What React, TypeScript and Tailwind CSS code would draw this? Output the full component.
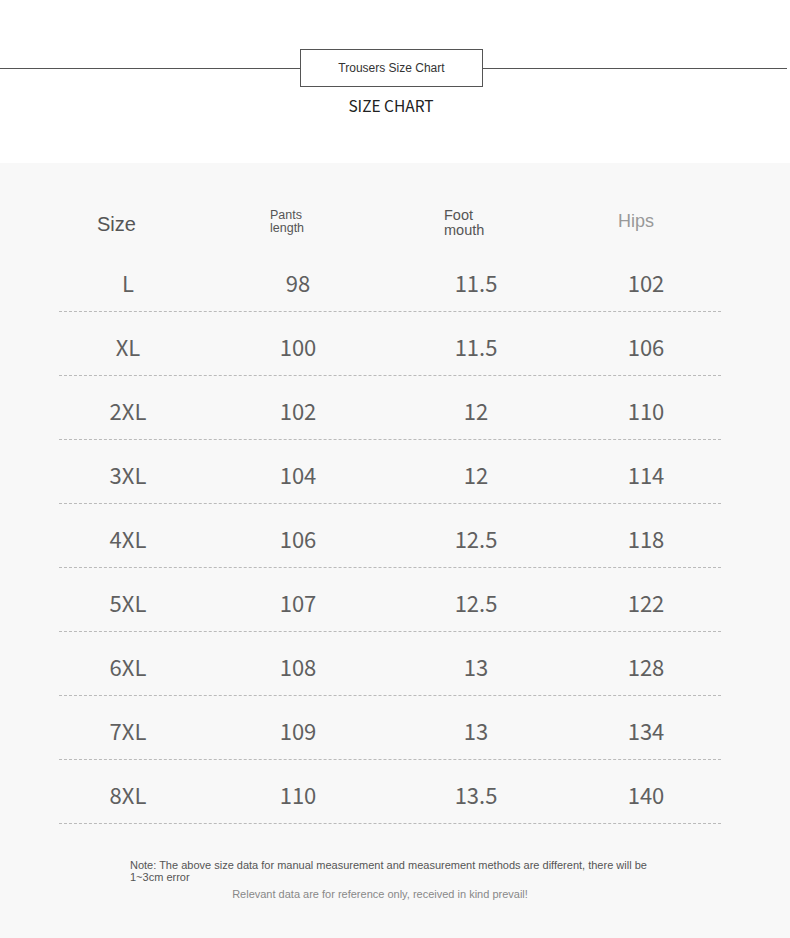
const rows: [string, string, string, string][] = [
  ['L', '98', '11.5', '102'],
  ['XL', '100', '11.5', '106'],
  ['2XL', '102', '12', '110'],
  ['3XL', '104', '12', '114'],
  ['4XL', '106', '12.5', '118'],
  ['5XL', '107', '12.5', '122'],
  ['6XL', '108', '13', '128'],
  ['7XL', '109', '13', '134'],
  ['8XL', '110', '13.5', '140'],
]

const cjk = { fontFamily: '"Noto Sans CJK SC", "Noto Sans", sans-serif' }
const arial = { fontFamily: '"Liberation Sans", Arial, sans-serif' }

export default function App() {
  return (
    <div className="w-[790px] min-h-[938px] bg-[#f8f8f8]">
      {/* title */}
      <div className="bg-white h-[163px] pt-[49px]">
        <div className="flex items-center w-[787px]">
          <div className="w-[300px] h-px bg-[#555]" />
          <div
            className="w-[183px] h-[38px] border border-[#555] flex items-center justify-center text-[12px] text-[#333]"
            style={arial}
          >
            Trousers Size Chart
          </div>
          <div className="flex-1 h-px bg-[#555]" />
        </div>
        <div className="w-[782px] text-center text-[15.5px] leading-[20px] mt-[8px] text-[#222]" style={cjk}>
          SIZE CHART
        </div>
      </div>

      {/* table */}
      <div className="pl-[59px]">
        <div className="grid grid-cols-[138px_202px_154px_186px] h-[85px] text-[#555]" style={arial}>
          <div className="pt-[50px] pl-[38px] text-[20px] leading-[22px]">Size</div>
          <div className="pt-[46px] pl-[73px] text-[12.5px] leading-[13px]">
            Pants
            <br />
            length
          </div>
          <div className="pt-[45px] pl-[45px] text-[14.5px] leading-[15px]">
            <div>Foot</div>
            <div>mouth</div>
          </div>
          <div className="pt-[48px] pl-[65px] text-[18px] leading-[20px] text-[#999]">Hips</div>
        </div>

        {rows.map((r, i) => (
          <div key={i} className="w-[662px] h-[64px] border-b border-dashed border-[#bbb]">
            <div
              className="grid grid-cols-[138px_202px_154px_186px] h-full items-center pt-[5px] text-[22px] text-[#606060]"
              style={cjk}
            >
              {r.map((c, j) => (
                <div key={j} className="text-center">
                  {c}
                </div>
              ))}
            </div>
          </div>
        ))}
      </div>

      {/* notes */}
      <div className="pt-[35px] pl-[130px] text-[11px] leading-[12px]" style={arial}>
        <p className="w-[520px] text-[#555]">
          Note: The above size data for manual measurement and measurement methods are different, there will be
          1~3cm error
        </p>
        <p className="w-[500px] mt-[5px] text-center text-[#888]">
          Relevant data are for reference only, received in kind prevail!
        </p>
      </div>
    </div>
  )
}
